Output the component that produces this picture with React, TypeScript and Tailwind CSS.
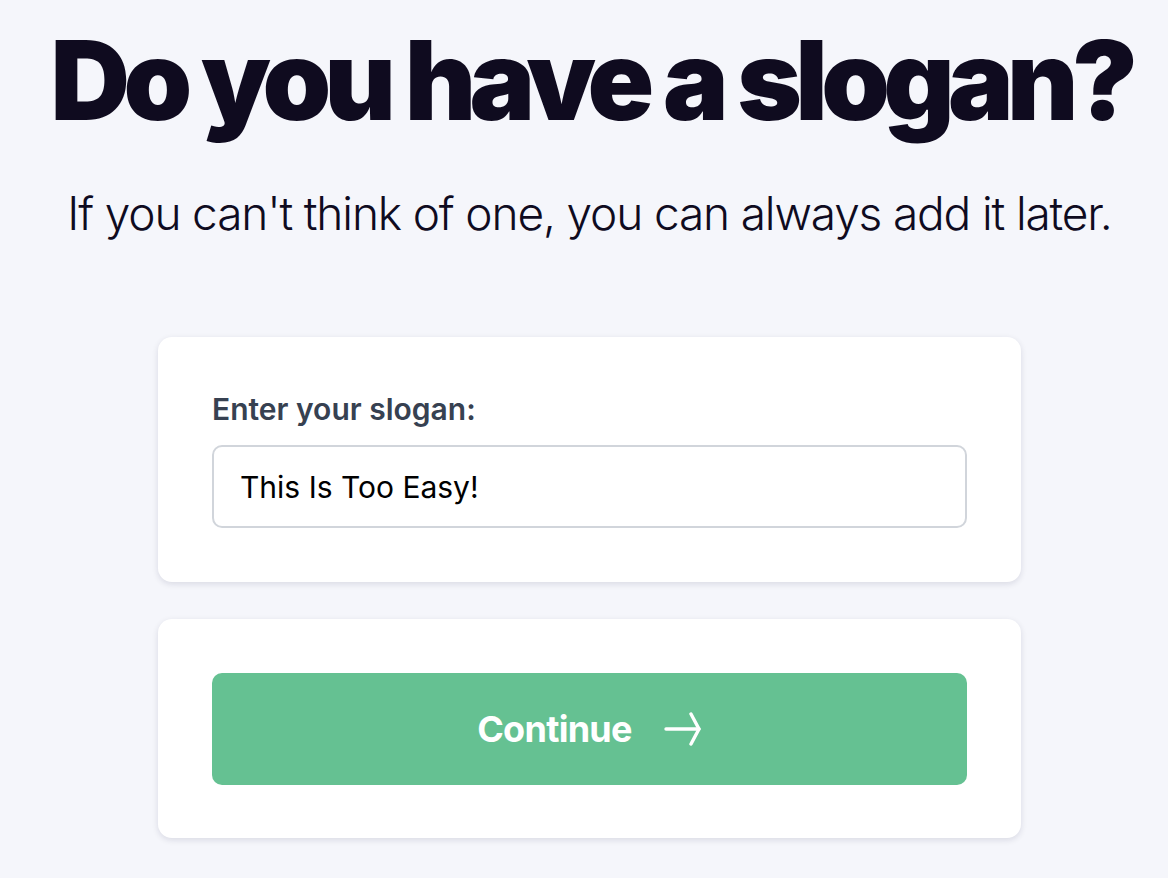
export default function App() {
  return (
    <div className="min-h-[878px] bg-[#f5f6fb] font-['Inter',sans-serif] flex flex-col items-center overflow-hidden">
      <h1 className="mt-[25px] ml-[14px] text-[110px] leading-[1] font-black tracking-[-0.06em] text-[#0f0b1f] whitespace-nowrap">
        Do you have a slogan?
      </h1>
      <p className="mt-[51px] ml-[11px] text-[46px] leading-[1.2] font-light tracking-[-0.025em] text-[#0f0b1f] whitespace-nowrap">
        If you can't think of one, you can always add it later.
      </p>

      <div className="mt-[96px] ml-[11px] w-[863px] flex flex-col gap-[37px]">
        <div className="bg-white rounded-[14px] shadow-[0_2px_6px_rgba(20,20,60,0.12)] px-[54px] py-[54px]">
          <label className="block text-[30px] font-semibold text-[#374151] leading-[1.2]">Enter your slogan:</label>
          <input
            defaultValue="This Is Too Easy!"
            className="mt-[18px] w-full h-[83px] rounded-[10px] border-2 border-[#d1d5db] px-[26px] text-[30px] text-black outline-none"
          />
        </div>
        <div className="bg-white rounded-[14px] shadow-[0_2px_6px_rgba(20,20,60,0.12)] px-[54px] pt-[54px] pb-[53px]">
          <button className="w-full h-[112px] rounded-[10px] bg-[#65c192] text-white flex items-center justify-center gap-[32px]">
            <span className="text-[36px] font-bold tracking-[-0.02em]">Continue</span>
            <svg width="38" height="34" viewBox="0 0 38 34" fill="none" stroke="currentColor" strokeWidth="3.4" strokeLinecap="round" strokeLinejoin="round">
              <path d="M2 17H35" />
              <path d="M27 2L35 17L27 32" />
            </svg>
          </button>
        </div>
      </div>
    </div>
  );
}
